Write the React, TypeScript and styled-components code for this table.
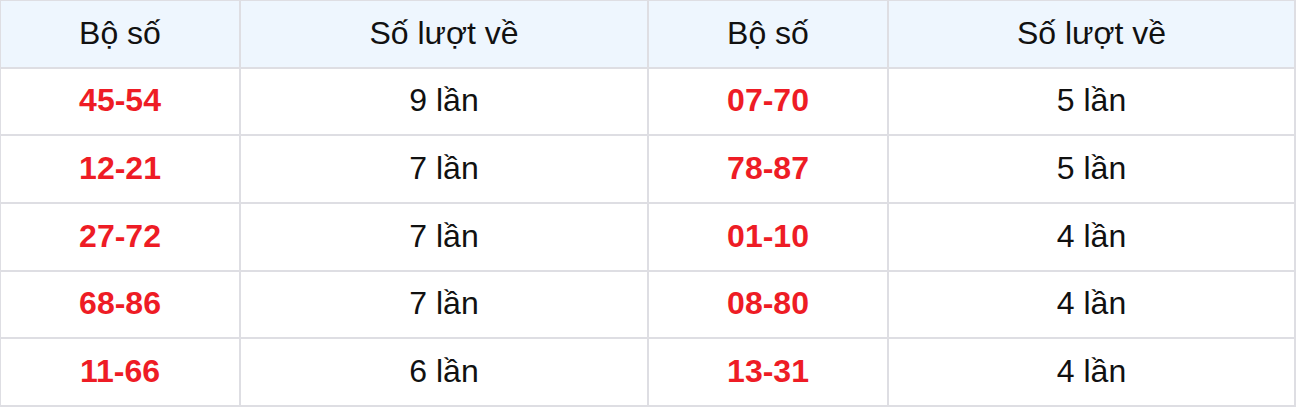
import { Fragment } from "react"
import styled, { createGlobalStyle } from "styled-components"

const GlobalStyle = createGlobalStyle`
  html, body {
    margin: 0;
    padding: 0;
    background: #fff;
  }
  body {
    font-family: "Liberation Sans", Arial, sans-serif;
  }
`

interface PairRow {
  pair: string
  count: number
}

const left: PairRow[] = [
  { pair: "45-54", count: 9 },
  { pair: "12-21", count: 7 },
  { pair: "27-72", count: 7 },
  { pair: "68-86", count: 7 },
  { pair: "11-66", count: 6 },
]

const right: PairRow[] = [
  { pair: "07-70", count: 5 },
  { pair: "78-87", count: 5 },
  { pair: "01-10", count: 4 },
  { pair: "08-80", count: 4 },
  { pair: "13-31", count: 4 },
]

const Table = styled.div`
  box-sizing: border-box;
  width: 1296px;
  height: 407px;
  display: grid;
  grid-template-columns: 240px 408px 240px 407px;
  grid-template-rows: repeat(6, 1fr);
  border-top: 1px solid #dedee3;
  border-left: 1px solid #dedee3;
`

const Cell = styled.div<{ $head?: boolean }>`
  box-sizing: border-box;
  display: flex;
  align-items: center;
  justify-content: center;
  border-right: 2px solid #dedee3;
  border-bottom: 2px solid #dedee3;
  background: ${props => props.$head ? "#eef6fe" : "#fff"};
  font-size: 32px;
  color: #111;
  padding-bottom: 1px;
`

const Pair = styled.span`
  font-weight: 700;
  color: #ee1c25;
`

export default function App() {
  return (
    <>
      <GlobalStyle />
      <Table>
        <Cell $head>Bộ số</Cell>
        <Cell $head>Số lượt về</Cell>
        <Cell $head>Bộ số</Cell>
        <Cell $head>Số lượt về</Cell>
        {left.map((row, i) => (
          <Fragment key={row.pair}>
            <Cell><Pair>{row.pair}</Pair></Cell>
            <Cell>{row.count} lần</Cell>
            <Cell><Pair>{right[i].pair}</Pair></Cell>
            <Cell>{right[i].count} lần</Cell>
          </Fragment>
        ))}
      </Table>
    </>
  )
}
